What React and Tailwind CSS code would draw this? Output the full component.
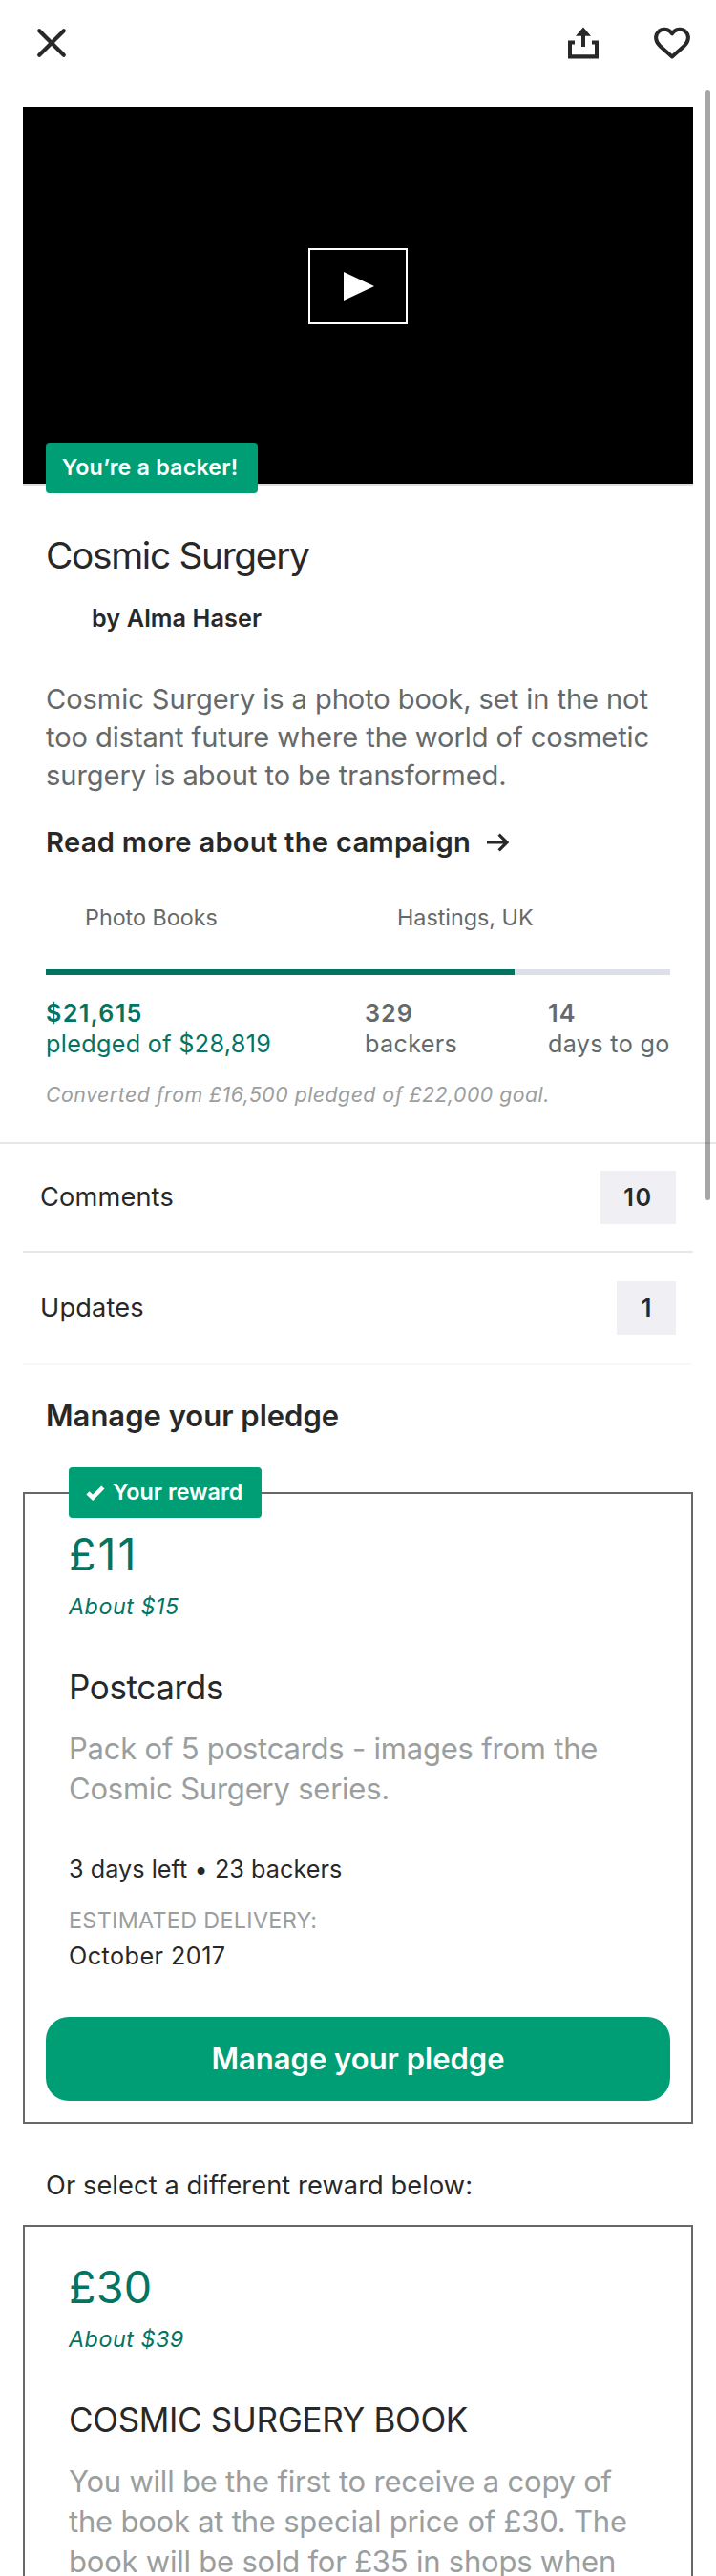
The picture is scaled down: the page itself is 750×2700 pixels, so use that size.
import React from 'react';

function CloseIcon() {
  return (
    <svg width="32" height="32" viewBox="0 0 32 32" fill="none" stroke="#282828" strokeWidth="4.2" strokeLinecap="round">
      <path d="M3.2 3.2 28.8 28.8M28.8 3.2 3.2 28.8" />
    </svg>
  );
}

function ShareIcon() {
  return (
    <svg width="32" height="34" viewBox="0 0 32 34" fill="#282828">
      <path d="M16 .6 24 9.8H18V21H14V9.8H8Z" />
      <path d="M0 14.4H7V18.4H4V29.2H28V18.4H25V14.4H32V33.5H0Z" />
    </svg>
  );
}

function HeartIcon() {
  return (
    <svg width="38" height="34" viewBox="0 0 38 34" fill="none" stroke="#282828" strokeWidth="4" strokeLinejoin="round">
      <path d="M19 7.4C17 4.4 14 2.8 10.9 2.8C5.9 2.8 2.1 6.6 2.1 11.8C2.1 15.4 3.8 17.8 6.4 20.2L19 31.4L31.6 20.2C34.2 17.8 35.9 15.4 35.9 11.8C35.9 6.6 32.1 2.8 27.1 2.8C24 2.8 21 4.4 19 7.4Z" />
    </svg>
  );
}

function ArrowIcon() {
  return (
    <svg width="24" height="20" viewBox="0 0 24 20" fill="none" stroke="#282828" strokeWidth="3.2">
      <path d="M0 10H21M12.6 1.6 21 10 12.6 18.4" />
    </svg>
  );
}

function CheckIcon() {
  return (
    <svg width="20" height="16" viewBox="0 0 20 16" fill="none" stroke="#ffffff" strokeWidth="4.6">
      <path d="M2 7.8 7.2 12.8 17.8 2" />
    </svg>
  );
}

function Reward({ amount, amountClass, about, title, children }) {
  return (
    <div className="pt-[35px] pl-[46px]">
      <p className={amountClass}>{amount}</p>
      <p className="mt-[11px] text-[23.3px] leading-8 tracking-[0.53px] text-[#037362] italic">{about}</p>
      <h3 className="mt-[46px] text-[35px] leading-11 tracking-[-0.35px] text-[#282828]">{title}</h3>
      <p className="mt-[22px] text-[31px] leading-[42px] tracking-[-0.22px] whitespace-nowrap text-[#9b9e9e]">{children}</p>
    </div>
  );
}

function CountRow({ label, className, children }) {
  return (
    <div className={className}>
      <span className="text-[27.2px] tracking-[0.15px]">{label}</span>
      {children}
    </div>
  );
}

export default function App() {
  return (
    <div className="relative h-[2700px] w-[750px] overflow-hidden bg-white font-['Inter',sans-serif] text-[#282828]">
      <header className="flex h-28 items-start pt-7 pr-[27px] pl-[38px]">
        <div className="pt-px">
          <CloseIcon />
        </div>
        <div className="ml-auto flex gap-[58px]">
          <ShareIcon />
          <HeartIcon />
        </div>
      </header>

      <div className="relative mx-6 flex h-[397px] justify-center border-b-2 border-[#dddddd] bg-black pt-[148px]">
        <div className="flex h-20 w-[104px] items-center justify-center border-2 border-white">
          <svg width="32" height="30" viewBox="0 0 32 30" fill="#ffffff" className="ml-0.5">
            <path d="M0 0 32 15 0 30Z" />
          </svg>
        </div>
        <div className="absolute -bottom-2.5 left-6 flex h-[53px] w-[222px] items-center justify-center rounded bg-[#009e74] pr-1 text-[23.3px] font-semibold tracking-[0.17px] whitespace-nowrap text-white">
          You’re a backer!
        </div>
      </div>

      <section className="px-12">
        <h1 className="mt-[49px] text-[38.8px] leading-12 tracking-[-1.3px]">Cosmic Surgery</h1>
        <p className="mt-[26px] pl-12 text-[25.2px] leading-8 font-semibold tracking-[0.1px]">by Alma Haser</p>
        <p className="mt-[49px] text-[29.1px] leading-10 tracking-[-0.08px] whitespace-nowrap text-[#656969]">
          Cosmic Surgery is a photo book, set in the not
          <br />
          too distant future where the world of cosmetic
          <br />
          surgery is about to be transformed.
        </p>
        <div className="mt-[30px] flex items-center gap-[17px] text-[29.1px] leading-10 font-semibold tracking-[0.28px]">
          Read more about the campaign
          <ArrowIcon />
        </div>
        <div className="mt-[43px] grid grid-cols-2 text-[23.3px] leading-8 text-[#656969]">
          <span className="pl-[41px]">Photo Books</span>
          <span className="pl-[41px]">Hastings, UK</span>
        </div>
        <div className="mt-[38px] h-1.5 bg-[#dcdee8]">
          <div className="h-full w-3/4 bg-[#037362]" />
        </div>
        <div className="mt-6 grid grid-cols-[334px_192px_1fr] text-[25.2px] leading-8 tracking-[0.32px] whitespace-nowrap text-[#656969]">
          <div className="text-[#037362]">
            <p className="font-semibold tracking-[1.3px]">$21,615</p>
            <p>pledged of $28,819</p>
          </div>
          <div>
            <p className="font-semibold tracking-[1px]">329</p>
            <p>backers</p>
          </div>
          <div>
            <p className="font-semibold tracking-[1px]">14</p>
            <p>days to go</p>
          </div>
        </div>
        <p className="mt-[21px] text-[21.3px] leading-8 tracking-[0.48px] whitespace-nowrap text-[#9b9e9e] italic">
          Converted from £16,500 pledged of £22,000 goal.
        </p>
      </section>

      <div className="mt-[34px] border-t-2 border-[#e6e7e7] px-6">
        <CountRow label="Comments" className="flex h-28 items-center justify-between px-[18px]">
          <span className="w-[79px] bg-[#efeff4] py-3 text-center text-[25.2px] leading-8 font-semibold tracking-[1.5px]">10</span>
        </CountRow>
        <CountRow label="Updates" className="flex h-[118px] items-center justify-between border-t-2 border-[#e6e7e7] px-[18px]">
          <span className="w-[62px] bg-[#efeff4] py-3 text-center text-[25.2px] leading-8 font-semibold">1</span>
        </CountRow>
        <div className="h-0.5 w-[700px] bg-[#f7f7f7]" />
      </div>

      <h2 className="mt-[33px] px-12 text-[31px] leading-10 font-semibold">Manage your pledge</h2>

      <article className="relative mx-6 mt-15 h-[662px] border-2 border-[#656969]">
        <div className="absolute -top-7 left-[46px] flex h-[53px] w-[202px] items-center gap-2 rounded bg-[#009e74] pl-[18px] text-[23.3px] font-semibold whitespace-nowrap text-white">
          <CheckIcon />
          Your reward
        </div>
        <Reward
          amount="£11"
          amountClass="text-[46.6px] leading-14 tracking-[2px] text-[#037362]"
          about="About $15"
          title="Postcards"
        >
          Pack of 5 postcards - images from the
          <br />
          Cosmic Surgery series.
        </Reward>
        <div className="pt-[47px] pl-[46px]">
          <p className="text-[25.2px] leading-8 tracking-[0.05px]">3 days left • 23 backers</p>
          <p className="mt-[22px] text-[23.3px] leading-8 tracking-[0.35px] text-[#9b9e9e]">ESTIMATED DELIVERY:</p>
          <p className="mt-[5px] text-[25.2px] leading-8 tracking-[0.45px]">October 2017</p>
        </div>
        <button className="mx-[22px] mt-12 flex h-22 w-[654px] items-center justify-center rounded-3xl bg-[#009e74] text-[31px] font-semibold text-white">
          Manage your pledge
        </button>
      </article>

      <p className="mt-[47px] px-12 text-[27.2px] leading-9 tracking-[0.1px]">Or select a different reward below:</p>

      <article className="mx-6 mt-[23px] h-[460px] border-2 border-[#656969]">
        <Reward
          amount="£30"
          amountClass="text-[46.6px] leading-14 tracking-[0.3px] text-[#037362]"
          about="About $39"
          title="COSMIC SURGERY BOOK"
        >
          You will be the first to receive a copy of
          <br />
          the book at the special price of £30. The
          <br />
          book will be sold for £35 in shops when
        </Reward>
      </article>

      <div className="absolute top-[94px] right-1.5 h-[1164px] w-[5px] rounded-full bg-black/35" />
    </div>
  );
}
